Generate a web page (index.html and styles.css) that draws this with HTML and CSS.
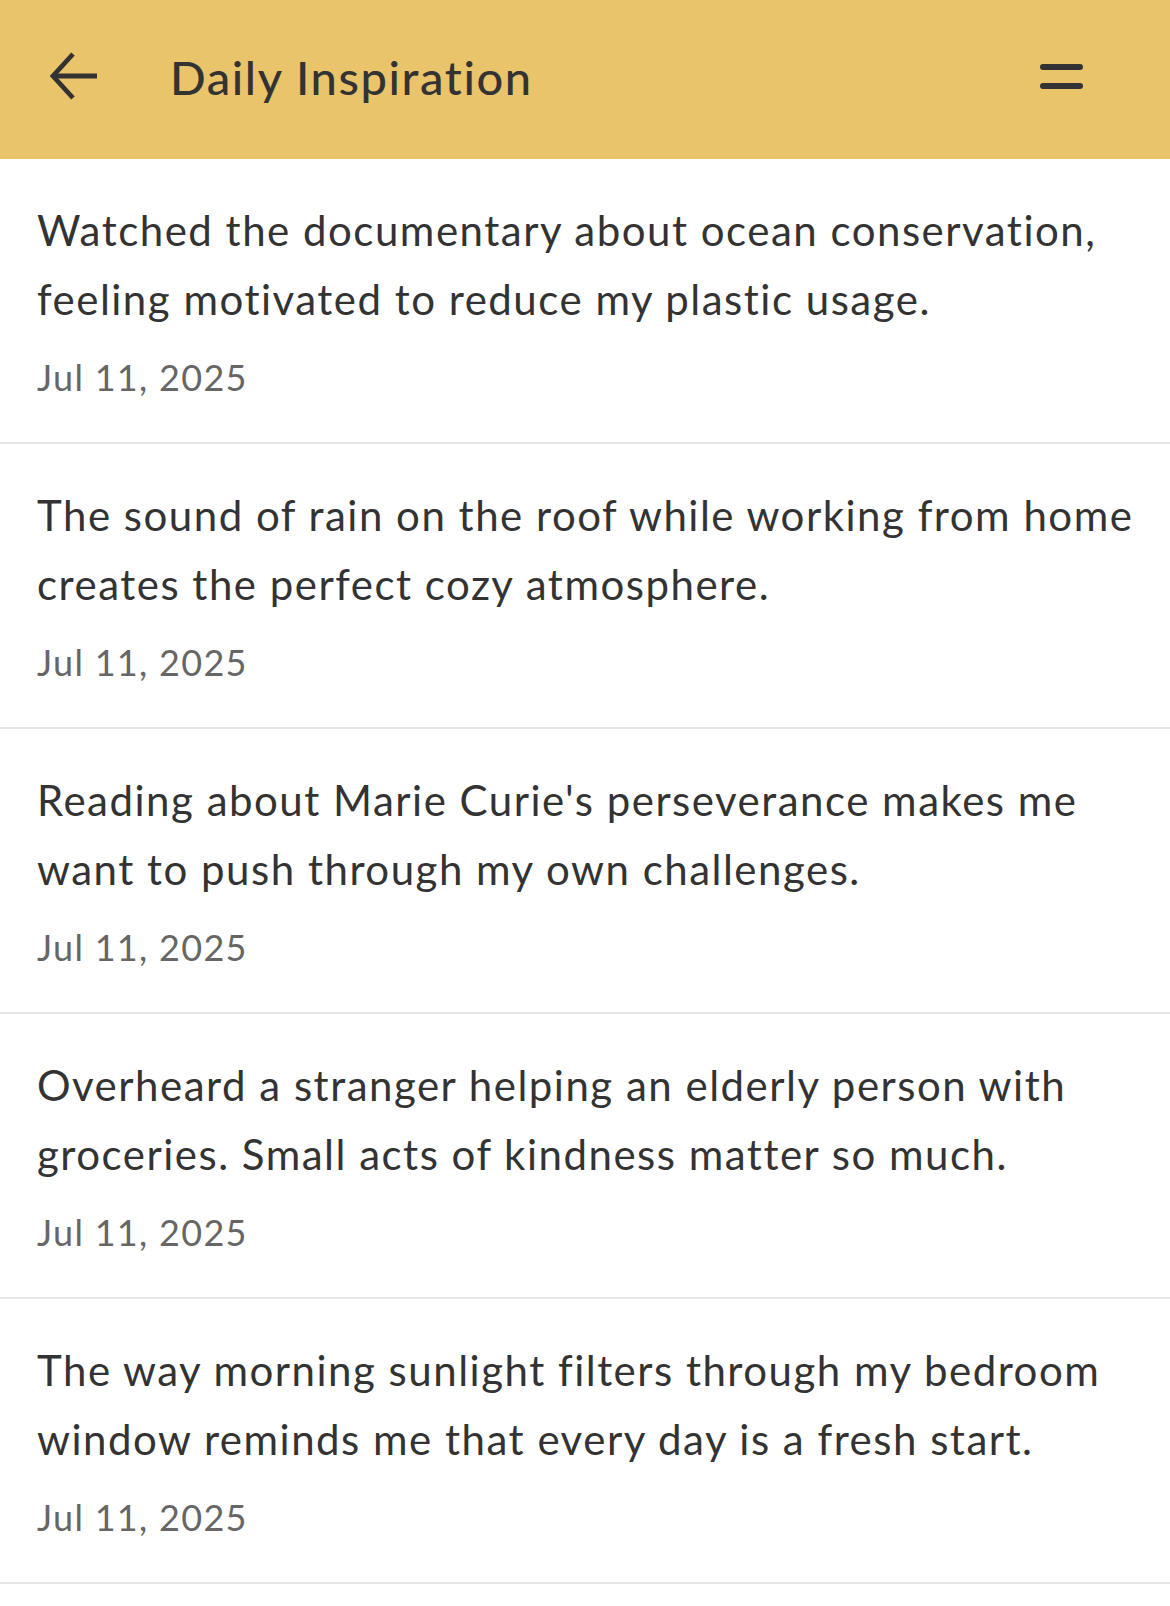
FILE: index.html
```html
<!DOCTYPE html>
<html lang="en">
<head>
<meta charset="utf-8">
<title>Daily Inspiration</title>
<link rel="stylesheet" href="styles.css">
</head>
<body>
<header class="appbar">
  <button class="icon-btn back" aria-label="Back">
    <svg width="50" height="50" viewBox="0 0 50 50" fill="none" stroke="#333" stroke-width="4.8" stroke-linecap="butt" stroke-linejoin="miter">
      <path d="M48 25H4"/>
      <path d="M24 3L4 25l20 22"/>
    </svg>
  </button>
  <h1 class="title">Daily Inspiration</h1>
  <button class="icon-btn menu" aria-label="Menu">
    <span class="bar"></span>
    <span class="bar"></span>
  </button>
</header>
<main class="list">
  <article class="entry">
    <p class="entry-text">Watched the documentary about ocean conservation, feeling motivated to reduce my plastic usage.</p>
    <p class="entry-date">Jul 11, 2025</p>
  </article>
  <article class="entry">
    <p class="entry-text">The sound of rain on the roof while working from home creates the perfect cozy atmosphere.</p>
    <p class="entry-date">Jul 11, 2025</p>
  </article>
  <article class="entry">
    <p class="entry-text">Reading about Marie Curie's perseverance makes me want to push through my own challenges.</p>
    <p class="entry-date">Jul 11, 2025</p>
  </article>
  <article class="entry">
    <p class="entry-text">Overheard a stranger helping an elderly person with groceries. Small acts of kindness matter so much.</p>
    <p class="entry-date">Jul 11, 2025</p>
  </article>
  <article class="entry">
    <p class="entry-text">The way morning sunlight filters through my bedroom window reminds me that every day is a fresh start.</p>
    <p class="entry-date">Jul 11, 2025</p>
  </article>
</main>
</body>
</html>
```
FILE: styles.css
```css
* { box-sizing: border-box; }
html, body {
  margin: 0;
  padding: 0;
  background: #fff;
  font-family: Lato, "Liberation Sans", sans-serif;
  color: #333;
}
.appbar {
  height: 159px;
  background: #E9C46A;
  display: flex;
  align-items: center;
  padding: 0 40px 0 49px;
}
.icon-btn {
  background: none;
  border: 0;
  padding: 0;
  display: flex;
  align-items: center;
  justify-content: center;
  cursor: pointer;
}
.back { width: 50px; height: 50px; margin-top: -8px; }
.title {
  margin: -6px 0 0 71px;
  font-size: 47px;
  font-weight: 500;
  color: #333;
  flex: 1;
  letter-spacing: 1.6px;
}
.menu {
  flex-direction: column;
  gap: 13px;
  width: 44px;
  height: 44px;
  margin-right: 47px;
  margin-top: -6px;
}
.bar {
  display: block;
  width: 43px;
  height: 6px;
  border-radius: 3px;
  background: #333;
}
.entry {
  border-bottom: 2px solid #e6e6e6;
  padding: 37px 30px 34px 37px;
  height: 285px;
}
.entry-text {
  margin: 0;
  font-size: 42px;
  line-height: 69px;
  color: #333;
  letter-spacing: 1.5px;
}
.entry-date {
  margin: 18px 0 0;
  font-size: 36px;
  line-height: 50px;
  color: #666;
  letter-spacing: 1.3px;
}
```
